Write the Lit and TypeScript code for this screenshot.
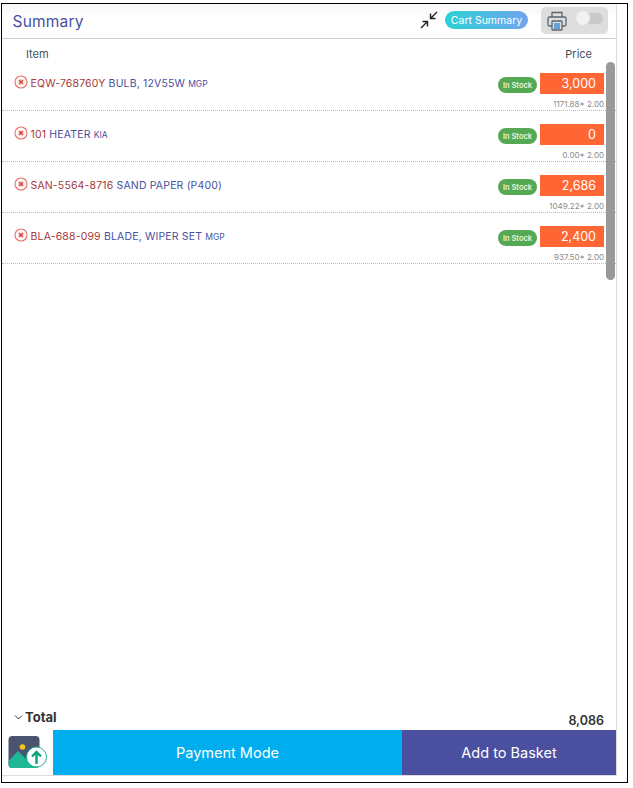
import { LitElement, html, css, svg } from "lit";
import { customElement } from "lit/decorators.js";

const rows = [
  { code: "EQW-768760Y", name: "BULB, 12V55W", brand: "MGP", price: "3,000", calc: "1171.88* 2.00" },
  { code: "101", name: "HEATER", brand: "KIA", price: "0", calc: "0.00* 2.00" },
  { code: "SAN-5564-8716", name: "SAND PAPER (P400)", brand: "", price: "2,686", calc: "1049.22* 2.00" },
  { code: "BLA-688-099", name: "BLADE, WIPER SET", brand: "MGP", price: "2,400", calc: "937.50* 2.00" },
];

@customElement("app-root")
export class AppRoot extends LitElement {
  static styles = css`
    :host { display: block; width: 633px; height: 788px; background: #fff; font-family: Inter, "Noto Sans", sans-serif; overflow: hidden; }
    .frame { box-sizing: border-box; width: 627px; height: 780px; margin: 3px 0 0 1px; border: 1px solid #000; border-width: 1.5px 1px 1.5px 1.5px; background: #fff; }
    .panel { box-sizing: border-box; width: 615px; height: 772px; border-right: 1px solid #ddd; border-bottom: 1px solid #ddd; display: flex; flex-direction: column; position: relative; }
    .head { box-sizing: border-box; height: 35px; flex: none; border-bottom: 1px solid #ccc; display: flex; align-items: center; padding: 0 8px 0 10.5px; background: linear-gradient(#f6f6f6, #fff 40%); }
    .title { flex: 1; font-size: 15.5px; color: #4a4f9f; letter-spacing: .2px; }
    .shrink { width: 20px; height: 20px; margin-right: 6px; position: relative; top: -1px; }
    .cart { width: 83px; height: 18px; border-radius: 9px; background: linear-gradient(90deg, #2bd1d6, #72a4ee); color: #fff; font-size: 10.5px; display: flex; align-items: center; justify-content: center; margin-right: 13px; position: relative; top: -1px; }
    .tools { width: 67px; height: 27px; border-radius: 5px; background: #dedede; display: flex; align-items: flex-start; padding: 4px 0 0 6px; box-sizing: border-box; gap: 9px; position: relative; top: -1px; }
    .tools svg { width: 20px; height: 20px; }
    .toggle { width: 27px; height: 11px; border-radius: 6px; background: #c9c9c9; margin-top: 2px; position: relative; }
    .knob { position: absolute; left: 0; top: -2px; width: 14px; height: 14px; border-radius: 50%; background: #f1f1f1; }
    .cols { height: 21px; flex: none; display: flex; justify-content: space-between; align-items: flex-end; padding: 0 24px 0 24px; font-size: 11px; line-height: 12px; color: #44505c; box-sizing: border-box; }
    .list { flex: 1; }
    .row { box-sizing: border-box; height: 51px; border-bottom: 1px dotted #bbb; display: flex; padding: 0 12px 0 11.5px; }
    .x { width: 14px; height: 14px; margin-top: 15px; flex: none; }
    .label { flex: 1; margin: 15.5px 0 0 3px; font-size: 10.5px; line-height: 16px; color: #4a4f9f; white-space: nowrap; letter-spacing: .16px; }
    .code { color: #a63a3a; }
    .brand { font-size: 8.5px; letter-spacing: 0; }
    .side { display: flex; flex-direction: column; align-items: flex-end; padding-top: 13px; }
    .line { display: flex; align-items: flex-start; gap: 3px; }
    .stock { width: 39px; height: 16px; border-radius: 8px; background: #55a854; color: #e9f5d9; font-size: 7.5px; font-weight: 600; display: flex; align-items: center; justify-content: center; margin-top: 4px; }
    .price { box-sizing: border-box; width: 64px; height: 21px; background: #ff6633; color: #fff; font-size: 12.5px; display: flex; align-items: center; justify-content: flex-end; padding-right: 8px; }
    .calc { font-size: 8px; color: #8a8a8a; margin-top: 5px; line-height: 10px; }
    .total { box-sizing: border-box; flex: none; height: 26px; display: flex; justify-content: space-between; padding: 6px 12px 0 12px; }
    .tl { display: flex; align-items: flex-start; gap: 2px; font-size: 13px; font-weight: 700; color: #333; line-height: 15px; }
    .tl svg { width: 9px; height: 14px; }
    .amt { font-size: 12.5px; font-weight: 600; color: #333; padding-top: 4px; line-height: 14px; }
    .foot { flex: none; height: 45px; display: flex; }
    .upload { width: 51px; flex: none; padding: 6px 0 0 6px; box-sizing: border-box; }
    .upload svg { width: 40px; height: 35px; display: block; }
    .btn { display: flex; align-items: center; justify-content: center; color: #fff; font-size: 14.5px; }
    .pay { width: 349px; background: #00aeef; }
    .add { flex: 1; background: #4a509f; }
    .bar { position: absolute; right: 1px; top: 58px; width: 9px; height: 218px; border-radius: 5px; background: #999; }
  `;

  render() {
    return html`<div class="frame"><div class="panel">
      <div class="head">
        <div class="title">Summary</div>
        <svg class="shrink" viewBox="0 0 20 20" fill="none" stroke="#222" stroke-width="1.4">
          ${svg`<path d="M2 18 8 12M3.5 11.5H8.5V16.5M18 2 12 8M16.5 8.5H11.5V3.5"/>`}
        </svg>
        <div class="cart">Cart Summary</div>
        <div class="tools">
          <svg viewBox="0 0 20 20" fill="none" stroke="#5b6670" stroke-width="1.3">
            ${svg`<path d="M5 6V1.5H15V6"/><path d="M5 15H2.5A1.5 1.5 0 0 1 1 13.5V7.5A1.5 1.5 0 0 1 2.5 6H17.5A1.5 1.5 0 0 1 19 7.5V13.5A1.5 1.5 0 0 1 17.5 15H15"/><rect x="5" y="10" width="10" height="9" rx=".5"/><path d="M7 13H13M7 15H13M7 17H13" stroke="#3f8fd8"/>`}
          </svg>
          <div class="toggle"><div class="knob"></div></div>
        </div>
      </div>
      <div class="cols"><span>Item</span><span>Price</span></div>
      <div class="list">
        ${rows.map((r) => html`<div class="row">
          <svg class="x" viewBox="0 0 14 14" fill="none">
            ${svg`<circle cx="7" cy="7" r="6" stroke="#ea6f66" stroke-width="1.1"/><circle cx="7" cy="7" r="3.6" fill="#fbdcd9"/><path d="M5.2 5.2 8.8 8.8M8.8 5.2 5.2 8.8" stroke="#d8423a" stroke-width="1.5"/>`}
          </svg>
          <div class="label"><span class="code">${r.code}</span> ${r.name} ${r.brand ? html`<span class="brand">${r.brand}</span>` : ""}</div>
          <div class="side">
            <div class="line"><div class="stock">In Stock</div><div class="price">${r.price}</div></div>
            <div class="calc">${r.calc}</div>
          </div>
        </div>`)}
      </div>
      <div class="total">
        <div class="tl"><svg viewBox="0 0 9 14" fill="none" stroke="#333" stroke-width="1">${svg`<path d="M1 5.5 4.5 9 8 5.5"/>`}</svg>Total</div>
        <div class="amt">8,086</div>
      </div>
      <div class="foot">
        <div class="upload">
          <svg viewBox="0 0 40 35">
            ${svg`<rect x="0.5" y="0" width="31" height="32" rx="4" fill="#4a5470"/>
            <path d="M0.5 25 10 15 18 23 24 18 31.5 24V28A4 4 0 0 1 27.5 32H4.5A4 4 0 0 1 0.5 28Z" fill="#1fb894"/>
            <circle cx="14.5" cy="11" r="2.8" fill="#f5c518"/>
            <circle cx="28.5" cy="21" r="10" fill="#fff" stroke="#1fb894" stroke-width="1"/>
            <path d="M28.5 28V16M24 20.5 28.5 16 33 20.5" fill="none" stroke="#0e9f7c" stroke-width="2.4"/>`}
          </svg>
        </div>
        <div class="btn pay">Payment Mode</div>
        <div class="btn add">Add to Basket</div>
      </div>
      <div class="bar"></div>
    </div></div>`;
  }
}
